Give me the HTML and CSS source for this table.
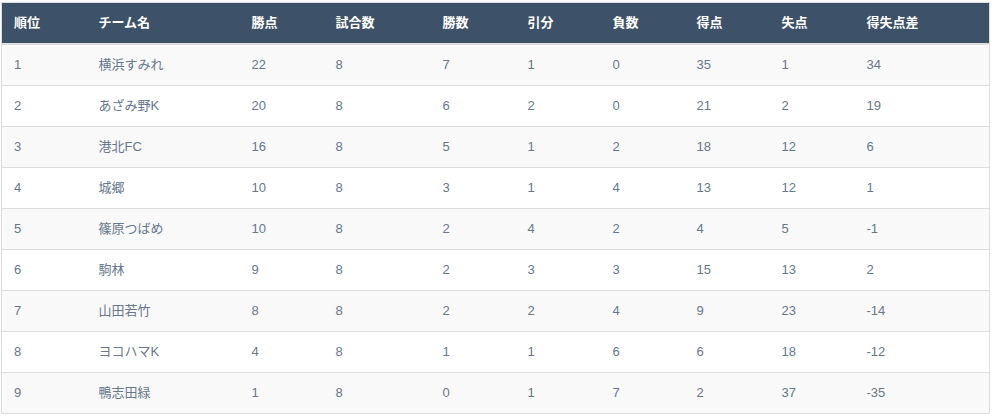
FILE: index.html
```html
<!DOCTYPE html>
<html lang="ja">
<head>
<meta charset="utf-8">
<link rel="stylesheet" href="styles.css">
</head>
<body>
<div class="wrap">
<table class="standings">
<colgroup>
<col class="c1"><col class="c2"><col class="c3"><col class="c4"><col class="c5"><col class="c6"><col class="c7"><col class="c8"><col class="c9"><col class="c10">
</colgroup>
<thead>
<tr><th>順位</th><th>チーム名</th><th>勝点</th><th>試合数</th><th>勝数</th><th>引分</th><th>負数</th><th>得点</th><th>失点</th><th>得失点差</th></tr>
</thead>
<tbody>
<tr><td>1</td><td>横浜すみれ</td><td>22</td><td>8</td><td>7</td><td>1</td><td>0</td><td>35</td><td>1</td><td>34</td></tr>
<tr><td>2</td><td>あざみ野K</td><td>20</td><td>8</td><td>6</td><td>2</td><td>0</td><td>21</td><td>2</td><td>19</td></tr>
<tr><td>3</td><td>港北FC</td><td>16</td><td>8</td><td>5</td><td>1</td><td>2</td><td>18</td><td>12</td><td>6</td></tr>
<tr><td>4</td><td>城郷</td><td>10</td><td>8</td><td>3</td><td>1</td><td>4</td><td>13</td><td>12</td><td>1</td></tr>
<tr><td>5</td><td>篠原つばめ</td><td>10</td><td>8</td><td>2</td><td>4</td><td>2</td><td>4</td><td>5</td><td>-1</td></tr>
<tr><td>6</td><td>駒林</td><td>9</td><td>8</td><td>2</td><td>3</td><td>3</td><td>15</td><td>13</td><td>2</td></tr>
<tr><td>7</td><td>山田若竹</td><td>8</td><td>8</td><td>2</td><td>2</td><td>4</td><td>9</td><td>23</td><td>-14</td></tr>
<tr><td>8</td><td>ヨコハマK</td><td>4</td><td>8</td><td>1</td><td>1</td><td>6</td><td>6</td><td>18</td><td>-12</td></tr>
<tr><td>9</td><td>鴨志田緑</td><td>1</td><td>8</td><td>0</td><td>1</td><td>7</td><td>2</td><td>37</td><td>-35</td></tr>
</tbody>
</table>
</div>
</body>
</html>
```
FILE: styles.css
```css
html, body {
  margin: 0;
  padding: 0;
  background: #ffffff;
}
.wrap {
  padding: 2px 2px 1px 1px;
}
.standings {
  width: 100%;
  border-collapse: collapse;
  table-layout: fixed;
  border: 1px solid #dddddd;
  font-family: "Liberation Sans", Arial, "Noto Sans CJK JP", sans-serif;
  font-size: 13px;
  line-height: 20px;
  color: #66778e;
}
.c1 { width: 85px; }
.c2 { width: 153px; }
.c3 { width: 84px; }
.c4 { width: 107px; }
.c5 { width: 85px; }
.c6 { width: 85px; }
.c7 { width: 84px; }
.c8 { width: 85px; }
.c9 { width: 85px; }
.standings th {
  background: #3d5168;
  color: #ffffff;
  font-weight: bold;
  text-align: left;
  padding: 10px 12px;
  border-bottom: 2px solid #dddddd;
}
.standings td {
  padding: 10px 12px;
  border-top: 1px solid #dddddd;
  text-align: left;
}
.standings tbody tr:nth-child(odd) {
  background: #f9f9f9;
}
.standings tbody tr:nth-child(even) {
  background: #ffffff;
}
```
